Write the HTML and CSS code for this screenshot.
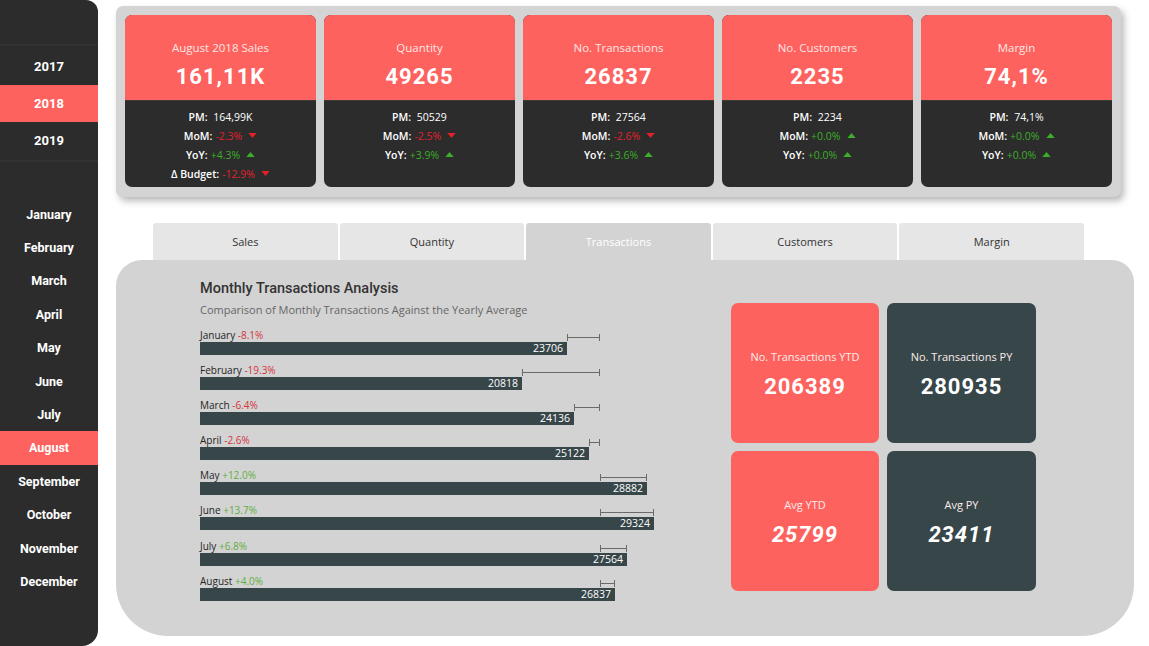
FILE: index.html
```html
<!DOCTYPE html>
<html lang="en">
<head>
<meta charset="utf-8">
<title>Transactions Dashboard</title>
<link rel="stylesheet" href="styles.css">
</head>
<body>
<div class="app">
  <aside class="sidebar">
    <div class="years">
      <div class="item">2017</div>
      <div class="item active">2018</div>
      <div class="item">2019</div>
    </div>
    <div class="months">
      <div class="item">January</div>
      <div class="item">February</div>
      <div class="item">March</div>
      <div class="item">April</div>
      <div class="item">May</div>
      <div class="item">June</div>
      <div class="item">July</div>
      <div class="item active">August</div>
      <div class="item">September</div>
      <div class="item">October</div>
      <div class="item">November</div>
      <div class="item">December</div>
    </div>
  </aside>

  <main class="content">
    <section class="kpi-panel">
      <div class="kpi">
        <div class="kpi-top">
          <div class="kpi-title">August 2018 Sales</div>
          <div class="kpi-value">161,11K</div>
        </div>
        <div class="kpi-bottom">
          <div class="line"><span class="lbl">PM:</span> 164,99K</div>
          <div class="line"><span class="lbl">MoM:</span> <span class="neg">-2.3%</span> <svg class="tri" viewBox="0 0 10 6"><path d="M0 0H10L5 6Z" fill="#e3212b"/></svg></div>
          <div class="line"><span class="lbl">YoY:</span> <span class="pos">+4.3%</span> <svg class="tri" viewBox="0 0 10 6"><path d="M0 6H10L5 0Z" fill="#3cae2a"/></svg></div>
          <div class="line"><span class="lbl">Δ Budget:</span> <span class="neg">-12.9%</span> <svg class="tri" viewBox="0 0 10 6"><path d="M0 0H10L5 6Z" fill="#e3212b"/></svg></div>
        </div>
      </div>
      <div class="kpi">
        <div class="kpi-top">
          <div class="kpi-title">Quantity</div>
          <div class="kpi-value">49265</div>
        </div>
        <div class="kpi-bottom">
          <div class="line"><span class="lbl">PM:</span> 50529</div>
          <div class="line"><span class="lbl">MoM:</span> <span class="neg">-2.5%</span> <svg class="tri" viewBox="0 0 10 6"><path d="M0 0H10L5 6Z" fill="#e3212b"/></svg></div>
          <div class="line"><span class="lbl">YoY:</span> <span class="pos">+3.9%</span> <svg class="tri" viewBox="0 0 10 6"><path d="M0 6H10L5 0Z" fill="#3cae2a"/></svg></div>
        </div>
      </div>
      <div class="kpi">
        <div class="kpi-top">
          <div class="kpi-title">No. Transactions</div>
          <div class="kpi-value">26837</div>
        </div>
        <div class="kpi-bottom">
          <div class="line"><span class="lbl">PM:</span> 27564</div>
          <div class="line"><span class="lbl">MoM:</span> <span class="neg">-2.6%</span> <svg class="tri" viewBox="0 0 10 6"><path d="M0 0H10L5 6Z" fill="#e3212b"/></svg></div>
          <div class="line"><span class="lbl">YoY:</span> <span class="pos">+3.6%</span> <svg class="tri" viewBox="0 0 10 6"><path d="M0 6H10L5 0Z" fill="#3cae2a"/></svg></div>
        </div>
      </div>
      <div class="kpi">
        <div class="kpi-top">
          <div class="kpi-title">No. Customers</div>
          <div class="kpi-value">2235</div>
        </div>
        <div class="kpi-bottom">
          <div class="line"><span class="lbl">PM:</span> 2234</div>
          <div class="line"><span class="lbl">MoM:</span> <span class="pos">+0.0%</span> <svg class="tri" viewBox="0 0 10 6"><path d="M0 6H10L5 0Z" fill="#3cae2a"/></svg></div>
          <div class="line"><span class="lbl">YoY:</span> <span class="pos">+0.0%</span> <svg class="tri" viewBox="0 0 10 6"><path d="M0 6H10L5 0Z" fill="#3cae2a"/></svg></div>
        </div>
      </div>
      <div class="kpi">
        <div class="kpi-top">
          <div class="kpi-title">Margin</div>
          <div class="kpi-value">74,1%</div>
        </div>
        <div class="kpi-bottom">
          <div class="line"><span class="lbl">PM:</span> 74,1%</div>
          <div class="line"><span class="lbl">MoM:</span> <span class="pos">+0.0%</span> <svg class="tri" viewBox="0 0 10 6"><path d="M0 6H10L5 0Z" fill="#3cae2a"/></svg></div>
          <div class="line"><span class="lbl">YoY:</span> <span class="pos">+0.0%</span> <svg class="tri" viewBox="0 0 10 6"><path d="M0 6H10L5 0Z" fill="#3cae2a"/></svg></div>
        </div>
      </div>
    </section>

    <nav class="tabs">
      <div class="tab">Sales</div>
      <div class="tab">Quantity</div>
      <div class="tab active">Transactions</div>
      <div class="tab">Customers</div>
      <div class="tab">Margin</div>
    </nav>

    <section class="analysis">
      <div class="chart">
        <div class="chart-title">Monthly Transactions Analysis</div>
        <div class="chart-sub">Comparison of Monthly Transactions Against the Yearly Average</div>
        <div class="rows">
          <div class="row">
            <div class="row-label">January <span class="neg">-8.1%</span></div>
            <div class="bar" style="width:367px">23706</div>
            <div class="whisker" style="left:367px;width:33px"></div>
          </div>
          <div class="row">
            <div class="row-label">February <span class="neg">-19.3%</span></div>
            <div class="bar" style="width:322px">20818</div>
            <div class="whisker" style="left:322px;width:78px"></div>
          </div>
          <div class="row">
            <div class="row-label">March <span class="neg">-6.4%</span></div>
            <div class="bar" style="width:374px">24136</div>
            <div class="whisker" style="left:374px;width:26px"></div>
          </div>
          <div class="row">
            <div class="row-label">April <span class="neg">-2.6%</span></div>
            <div class="bar" style="width:389px">25122</div>
            <div class="whisker" style="left:389px;width:11px"></div>
          </div>
          <div class="row">
            <div class="row-label">May <span class="pos">+12.0%</span></div>
            <div class="bar" style="width:447px">28882</div>
            <div class="whisker" style="left:400px;width:47px"></div>
          </div>
          <div class="row">
            <div class="row-label">June <span class="pos">+13.7%</span></div>
            <div class="bar" style="width:454px">29324</div>
            <div class="whisker" style="left:400px;width:54px"></div>
          </div>
          <div class="row">
            <div class="row-label">July <span class="pos">+6.8%</span></div>
            <div class="bar" style="width:427px">27564</div>
            <div class="whisker" style="left:400px;width:27px"></div>
          </div>
          <div class="row">
            <div class="row-label">August <span class="pos">+4.0%</span></div>
            <div class="bar" style="width:415px">26837</div>
            <div class="whisker" style="left:400px;width:15px"></div>
          </div>
        </div>
      </div>

      <div class="tiles">
        <div class="tile red">
          <div class="tile-title">No. Transactions YTD</div>
          <div class="tile-value">206389</div>
        </div>
        <div class="tile slate">
          <div class="tile-title">No. Transactions PY</div>
          <div class="tile-value">280935</div>
        </div>
        <div class="tile red">
          <div class="tile-title">Avg YTD</div>
          <div class="tile-value italic">25799</div>
        </div>
        <div class="tile slate">
          <div class="tile-title">Avg PY</div>
          <div class="tile-value italic">23411</div>
        </div>
      </div>
    </section>
  </main>
</div>
</body>
</html>
```

FILE: styles.css
```css
* { box-sizing: border-box; }

html, body {
  margin: 0;
  padding: 0;
  background: #ffffff;
}

body {
  width: 1149px;
  height: 646px;
  overflow: hidden;
  font-family: "Open Sans", "Noto Sans", sans-serif;
}

.app {
  display: flex;
  height: 646px;
}

/* ---------- sidebar ---------- */
.sidebar {
  flex: 0 0 98px;
  height: 646px;
  background: #2c2c2c;
  border-radius: 0 12px 16px 0;
  display: flex;
  flex-direction: column;
  font-family: Roboto, "DejaVu Sans", sans-serif;
  font-weight: 700;
  color: #ffffff;
}

.years {
  margin-top: 44px;
  padding-top: 2px;
  padding-bottom: 1px;
  border-top: 2px solid #323232;
  border-bottom: 2px solid #323232;
}

.years .item {
  height: 37px;
  display: flex;
  align-items: center;
  justify-content: center;
  font-size: 13px;
}

.months {
  margin-top: 35.5px;
}

.months .item {
  height: 33.4px;
  display: flex;
  align-items: center;
  justify-content: center;
  font-size: 12.5px;
}

.sidebar .item.active {
  background: #fd625e;
}

/* ---------- content ---------- */
.content {
  flex: 1;
  padding-left: 18px;
  display: flex;
  flex-direction: column;
}

.kpi-panel {
  margin-top: 6px;
  width: 1005px;
  height: 191px;
  background: #d4d4d4;
  border-radius: 7px;
  padding: 9px 9px 10px 9px;
  display: flex;
  gap: 8px;
  box-shadow: 3px 4px 7px rgba(0, 0, 0, 0.28);
}

.kpi {
  flex: 0 0 191px;
  border-radius: 7px;
  overflow: hidden;
  display: flex;
  flex-direction: column;
  background: #2c2c2c;
}

.kpi-top {
  height: 86px;
  background: #fd625e;
  display: flex;
  flex-direction: column;
  align-items: center;
  padding-top: 24px;
  border-bottom: 1px solid #3a3a3a;
}

.kpi-title {
  font-size: 11.5px;
  font-weight: 400;
  color: #fde6e4;
  line-height: 18px;
}

.kpi-value {
  margin-top: 7px;
  font-family: Roboto, "DejaVu Sans", sans-serif;
  font-weight: 700;
  font-size: 22px;
  line-height: 26px;
  letter-spacing: 1px;
  color: #ffffff;
}

.kpi-bottom {
  flex: 1;
  padding-top: 6px;
  display: flex;
  flex-direction: column;
  align-items: center;
  font-size: 10.5px;
  color: #ffffff;
}

.kpi-bottom .line {
  height: 19px;
  display: flex;
  align-items: center;
  gap: 3px;
  white-space: pre;
}

.kpi-bottom .lbl {
  font-weight: 600;
}

.neg { color: #e3212b; }
.pos { color: #3cae2a; }

.tri {
  width: 9px;
  height: 5px;
  margin-left: 3px;
}

/* ---------- tabs ---------- */
.tabs {
  margin-top: 26px;
  margin-left: 37px;
  display: flex;
  gap: 2px;
  height: 37px;
}

.tab {
  flex: 0 0 184.6px;
  background: #e6e6e6;
  border-radius: 3px 3px 0 0;
  display: flex;
  align-items: center;
  justify-content: center;
  font-size: 11px;
  color: #333333;
}

.tab.active {
  background: #d3d3d3;
  color: #ffffff;
}

/* ---------- analysis panel ---------- */
.analysis {
  width: 1018px;
  height: 376px;
  background: #d3d3d3;
  border-radius: 26px 22px 52px 52px;
  display: flex;
  padding: 20px 0 0 84px;
}

.chart {
  flex: 0 0 531px;
}

.chart-title {
  font-family: Roboto, "DejaVu Sans", sans-serif;
  font-weight: 500;
  font-size: 14.5px;
  line-height: 18px;
  color: #333333;
}

.chart-sub {
  margin-top: 4px;
  font-size: 11px;
  line-height: 16px;
  color: #666666;
}

.rows {
  margin-top: 10px;
  display: flex;
  flex-direction: column;
  gap: 8.1px;
}

.row {
  position: relative;
}

.row-label {
  height: 14px;
  font-size: 10px;
  line-height: 14px;
  color: #252423;
}

.row-label .neg { color: #d4343b; }
.row-label .pos { color: #62ae40; }

.bar {
  height: 13px;
  background: #374649;
  color: #ffffff;
  font-size: 10.5px;
  line-height: 13px;
  text-align: right;
  padding-right: 4px;
}

.whisker {
  position: absolute;
  top: 6px;
  height: 7px;
  border-left: 1.5px solid #6a6a6a;
  border-right: 1.5px solid #6a6a6a;
}

.whisker::after {
  content: "";
  position: absolute;
  left: 0;
  right: 0;
  top: 3px;
  height: 1px;
  background: #6a6a6a;
}

.tiles {
  margin-top: 23px;
  display: grid;
  grid-template-columns: 148px 149px;
  grid-template-rows: 140px 140px;
  gap: 8px;
  align-self: flex-start;
}

.tile {
  border-radius: 7px;
  display: flex;
  flex-direction: column;
  align-items: center;
  justify-content: center;
  color: #ffffff;
  padding-top: 2px;
}

.tile.red { background: #fd625e; }
.tile.slate { background: #374649; }

.tile-title {
  font-size: 11px;
  line-height: 16px;
  color: #fbeceb;
}

.tile-value {
  margin-top: 9px;
  font-family: Roboto, "DejaVu Sans", sans-serif;
  font-weight: 700;
  font-size: 22px;
  line-height: 26px;
  letter-spacing: 1px;
}

.tile-value.italic {
  font-style: italic;
}
```
